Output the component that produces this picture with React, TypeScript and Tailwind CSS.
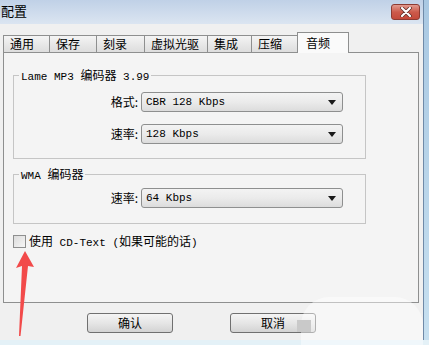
import type { ReactNode } from "react"

const cjk = "font-['Noto_Sans_CJK_SC','Noto_Sans',sans-serif]"

// latin runs in the old dialog font look like a small mono face
function M({ children }: { children: ReactNode }) {
	return (
		<span className="font-['Liberation_Mono','DejaVu_Sans_Mono',monospace] text-[11px]">
			{children}
		</span>
	)
}

const TABS = [
	{ label: "通用", w: "w-[47px]" },
	{ label: "保存", w: "w-[48px]" },
	{ label: "刻录", w: "w-[49px]" },
	{ label: "虚拟光驱", w: "w-[64px]" },
	{ label: "集成", w: "w-[45px]" },
	{ label: "压缩", w: "w-[47px]" },
]

function Caret() {
	return (
		<svg width="8" height="5" viewBox="0 0 8 5" className="shrink-0">
			<path d="M0 0 H8 L4 5 Z" fill="#1a1a1a" />
		</svg>
	)
}

function Select({ value }: { value: string }) {
	return (
		<div className="flex h-[20px] w-[202px] items-center justify-between rounded-[3px] border border-[#8e8f8f] bg-gradient-to-b from-[#f3f3f3] via-[#ebebeb] to-[#dcdcdc] pr-[6px] pl-[4px] leading-[18px]">
			<M>{value}</M>
			<Caret />
		</div>
	)
}

function Row({ label, value }: { label: string; value: string }) {
	return (
		<div className="flex h-[20px] items-center">
			<div className="w-[127px] pr-[3px] text-right text-[12px] leading-[18px]">
				{label}
			</div>
			<Select value={value} />
		</div>
	)
}

function Group({
	legend,
	className,
	children,
}: {
	legend: ReactNode
	className: string
	children: ReactNode
}) {
	return (
		<div className={`relative w-[353px] border border-[#c5c5c5] ${className}`}>
			<span className="absolute -top-[8px] left-[5px] bg-[#f4f4f4] px-[2px] text-[12px] leading-[14px]">
				{legend}
			</span>
			{children}
		</div>
	)
}

function Btn({ children }: { children: ReactNode }) {
	return (
		<div className="flex h-[20px] w-[86px] items-center justify-center rounded-[3px] border border-[#707070] bg-gradient-to-b from-[#f4f4f4] via-[#e6e6e6] to-[#d3d3d3] text-[12px] leading-[18px]">
			{children}
		</div>
	)
}

export default function App() {
	return (
		<div
			className={`relative flex h-[345px] w-[429px] overflow-hidden bg-[#f0f0f0] text-black ${cjk}`}
		>
			<div className="flex w-[423px] flex-col">
				{/* title bar */}
				<div className="flex h-[24px] items-start justify-between bg-gradient-to-b from-[#c0d1e7] to-[#dbe5f1] pt-[3px] pl-[1px]">
					<span className="text-[13px] leading-[16px]">配置</span>
					<div className="mt-[1px] mr-[3px] flex h-[16px] w-[29px] items-center justify-center rounded-[3px] border border-[#8d3b32] bg-gradient-to-b from-[#e19a8f] via-[#cc5a4b] to-[#c4493a]">
						<svg width="12" height="10" viewBox="0 0 12 10">
							<path
								d="M2 1 L10 9 M10 1 L2 9"
								stroke="#5b2a25"
								strokeWidth="3.6"
								strokeLinecap="round"
							/>
							<path
								d="M2 1 L10 9 M10 1 L2 9"
								stroke="#ffffff"
								strokeWidth="2.2"
								strokeLinecap="round"
							/>
						</svg>
					</div>
				</div>

				{/* tabs */}
				<div className="flex items-end pt-[8px] pl-[3px]">
					{TABS.map((t) => (
						<div
							key={t.label}
							className={`${t.w} -mr-px flex h-[17px] items-center border border-b-0 border-[#8e8f8f] bg-gradient-to-b from-[#f4f4f4] to-[#dddddd] pl-[6px] text-[12px] leading-[16px]`}
						>
							{t.label}
						</div>
					))}
					<div className="relative z-10 -mb-px flex h-[21px] w-[52px] items-center border border-b-0 border-[#8e8f8f] bg-[#fafafa] pl-[8px] text-[12px] leading-[16px]">
						音频
					</div>
				</div>

				{/* tab page */}
				<div className="ml-[3px] flex h-[251px] w-[416px] flex-col border border-[#8e8f8f] bg-[#f4f4f4] pl-[9px]">
					<Group
						className="mt-[22px] h-[84px] pt-[16px]"
						legend={
							<>
								<M>Lame MP3 </M>编码器<M> 3.99</M>
							</>
						}
					>
						<div className="flex flex-col gap-[12px]">
							<Row label="格式: " value="CBR 128 Kbps" />
							<Row label="速率: " value="128 Kbps" />
						</div>
					</Group>

					<Group
						className="mt-[15px] h-[50px] pt-[13px]"
						legend={
							<>
								<M>WMA </M>编码器
							</>
						}
					>
						<Row label="速率: " value="64 Kbps" />
					</Group>

					<div className="mt-[11px] flex h-[13px] items-center gap-[3px]">
						<div className="h-[13px] w-[13px] border border-[#8e8f8f] bg-gradient-to-br from-[#dcdcdc] to-[#f6f6f6]" />
						<span className="text-[12px] leading-[16px]">
							使用<M> CD-Text (</M>如果可能的话<M>)</M>
						</span>
					</div>
				</div>

				{/* buttons */}
				<div className="mt-[10px] flex gap-[57px] pl-[87px]">
					<Btn>确认</Btn>
					<Btn>取消</Btn>
				</div>
			</div>

			{/* right window frame */}
			<div className="flex w-[6px]">
				<div className="w-px bg-[#6f8aa8]" />
				<div className="flex-1 bg-gradient-to-b from-[#a9c8e2] to-[#c7e0f0]" />
			</div>

			{/* bottom frame strip */}
			<div className="absolute right-0 bottom-0 left-0 h-[5px] bg-[#e4f1f7]" />

			{/* watermark blob */}
			<div className="absolute right-[6px] bottom-0 h-[48px] w-[122px] rounded-t-[28px] bg-white/45" />
			<div className="absolute top-[320px] left-[297px] h-[12px] w-[14px] bg-[#c9c9c9]" />

			{/* red annotation arrow */}
			<svg
				className="absolute top-0 left-0"
				width="429"
				height="345"
				viewBox="0 0 429 345"
			>
				<polygon
					points="25,251 34,267 28,266 20.5,336 19,336 22,266 16,268"
					fill="#f24a4a"
				/>
			</svg>
		</div>
	)
}
